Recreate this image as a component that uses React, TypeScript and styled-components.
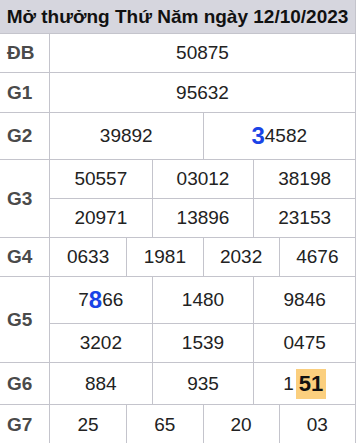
import styled, { createGlobalStyle } from "styled-components";

const GlobalStyle = createGlobalStyle`
  body {
    margin: 0;
    background: #ffffff;
    font-family: "Liberation Sans", Arial, sans-serif;
  }
`;

type Prize = {
  label: string;
  rows: string[][];
  heights: number[];
};

const prizes: Prize[] = [
  { label: "ĐB", rows: [["50875"]], heights: [39] },
  { label: "G1", rows: [["95632"]], heights: [40] },
  { label: "G2", rows: [["39892", "*3|4582"]], heights: [47] },
  {
    label: "G3",
    rows: [
      ["50557", "03012", "38198"],
      ["20971", "13896", "23153"],
    ],
    heights: [39, 39],
  },
  { label: "G4", rows: [["0633", "1981", "2032", "4676"]], heights: [39] },
  {
    label: "G5",
    rows: [
      ["7|*8|66", "1480", "9846"],
      ["3202", "1539", "0475"],
    ],
    heights: [47, 39],
  },
  { label: "G6", rows: [["884", "935", "1|#51"]], heights: [42] },
  { label: "G7", rows: [["25", "65", "20", "03"]], heights: [40] },
];

export default function App() {
  const rowHeights = [34, ...prizes.flatMap((p) => p.heights)];
  let rowIndex = 2;

  return (
    <>
      <GlobalStyle />
      <Board style={{ gridTemplateRows: rowHeights.map((h) => h + "px").join(" ") }}>
        <Title>Mở thưởng Thứ Năm ngày 12/10/2023</Title>
        {prizes.map((p) => {
          const start = rowIndex;
          rowIndex += p.rows.length;
          return [
            <Label key={p.label} $row={start} $span={p.rows.length}>
              {p.label}
            </Label>,
            ...p.rows.flatMap((r, ri) =>
              r.map((n, ci) => (
                <Num
                  key={p.label + ri + ci}
                  $row={start + ri}
                  $span={12 / r.length}
                  $first={ci === 0}
                >
                  {renderNumber(n)}
                </Num>
              ))
            ),
          ];
        })}
      </Board>
    </>
  );
}

// "*x" = blue big digit, "#x" = highlighted tail
function renderNumber(n: string) {
  return n.split("|").map((part, i) => {
    if (part.startsWith("*")) return <Hot key={i}>{part.slice(1)}</Hot>;
    if (part.startsWith("#")) return <Mark key={i}>{part.slice(1)}</Mark>;
    return <span key={i}>{part}</span>;
  });
}

const Board = styled.div`
  display: grid;
  width: 356px;
  grid-template-columns: 50px repeat(12, 1fr);
  border-right: 1px solid #c4c4cc;
  box-sizing: border-box;
`;

const Title = styled.div`
  grid-column: 1 / -1;
  display: flex;
  align-items: center;
  justify-content: center;
  background: #d6d6de;
  border-bottom: 1px solid #c4c4cc;
  color: #111;
  font-size: 19px;
  font-weight: 700;
  white-space: nowrap;
`;

const Label = styled.div<{ $row: number; $span: number }>`
  grid-column: 1;
  grid-row: ${(p) => p.$row} / span ${(p) => p.$span};
  display: flex;
  align-items: center;
  padding-left: 7px;
  border-right: 1px solid #c4c4cc;
  border-bottom: 1px solid #c4c4cc;
  color: #4a4a4a;
  font-size: 19px;
  font-weight: 700;
`;

const Num = styled.div<{ $row: number; $span: number; $first: boolean }>`
  grid-row: ${(p) => p.$row};
  grid-column: span ${(p) => p.$span};
  display: flex;
  align-items: center;
  justify-content: center;
  border-bottom: 1px solid #c4c4cc;
  border-left: ${(p) => (p.$first ? "none" : "1px solid #c4c4cc")};
  color: #222;
  font-size: 19px;
`;

const Hot = styled.span`
  color: #1a44e6;
  font-size: 24px;
  font-weight: 700;
`;

const Mark = styled.span`
  margin-left: 2px;
  padding: 0 3px;
  line-height: 30px;
  background: #fbcf7e;
  color: #111;
  font-size: 22px;
  font-weight: 700;
`;
